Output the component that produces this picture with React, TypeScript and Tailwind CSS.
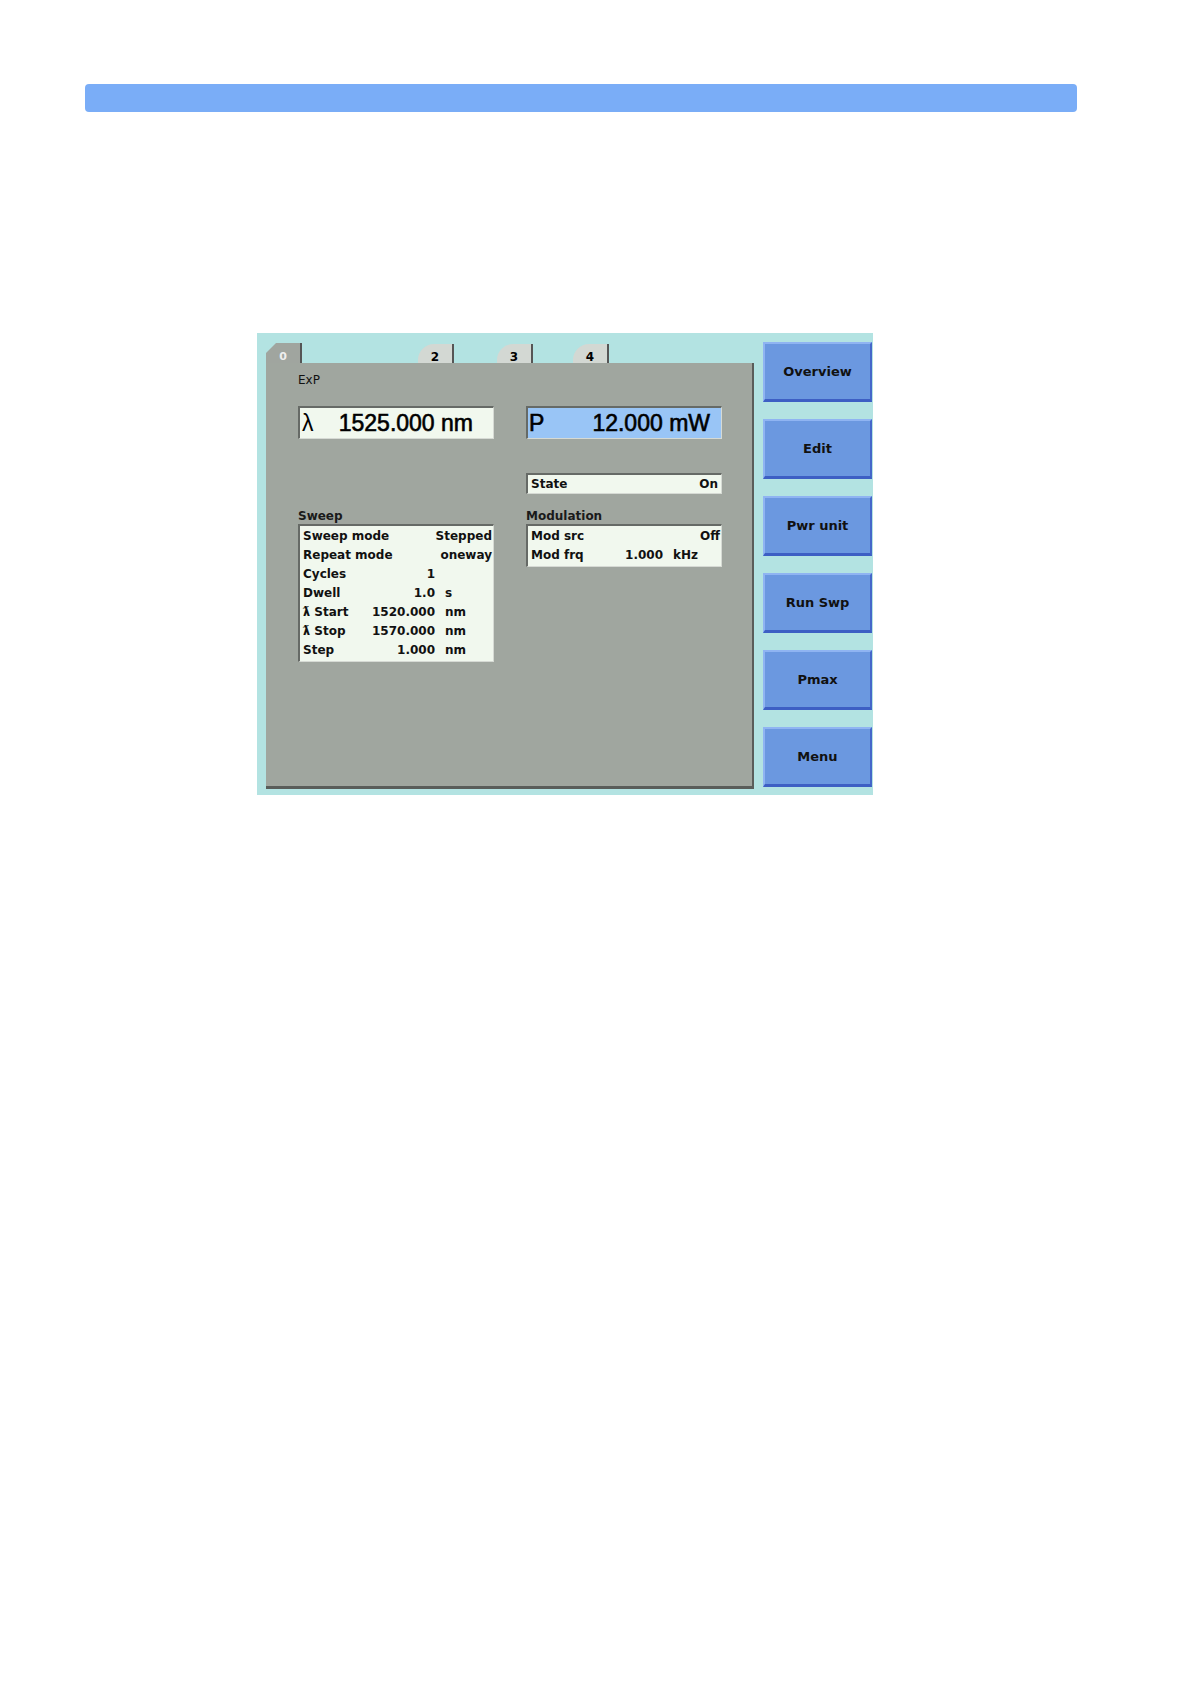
import React from 'react';

const uiFont = { fontFamily: '"DejaVu Sans", Verdana, sans-serif' };
const bigFont = { fontFamily: '"Liberation Sans", Arial, sans-serif' };

type Row = { label: string; value: string; unit?: string; wide?: boolean };

const sweepRows: Row[] = [
  { label: 'Sweep mode', value: 'Stepped', wide: true },
  { label: 'Repeat mode', value: 'oneway', wide: true },
  { label: 'Cycles', value: '1' },
  { label: 'Dwell', value: '1.0', unit: 's' },
  { label: 'ƛ Start', value: '1520.000', unit: 'nm' },
  { label: 'ƛ Stop', value: '1570.000', unit: 'nm' },
  { label: 'Step', value: '1.000', unit: 'nm' },
];

const modRows: Row[] = [
  { label: 'Mod src', value: 'Off', wide: true },
  { label: 'Mod frq', value: '1.000', unit: 'kHz' },
];

const buttons = ['Overview', 'Edit', 'Pwr unit', 'Run Swp', 'Pmax', 'Menu'];

function ParamRow({ row }: { row: Row }) {
  if (row.wide) {
    return (
      <div className="flex h-[19px] items-center justify-between pr-[1px]">
        <span>{row.label}</span>
        <span>{row.value}</span>
      </div>
    );
  }
  return (
    <div className="flex h-[19px] items-center">
      <span className="w-[66px] shrink-0 whitespace-nowrap">{row.label}</span>
      <span className="w-[66px] shrink-0 text-right">{row.value}</span>
      {row.unit && <span className="ml-[10px]">{row.unit}</span>}
    </div>
  );
}

function ParamBox({ rows }: { rows: Row[] }) {
  return (
    <div className="w-[196px] border-t-2 border-l-2 border-[#666a66] border-r border-b border-r-[#d6dad4] border-b-[#d6dad4] bg-[#f1f8ee] pl-[3px] pb-[2px] text-[12px] font-bold text-[#111]">
      {rows.map((r) => (
        <ParamRow key={r.label} row={r} />
      ))}
    </div>
  );
}

function Tab({ label, className }: { label: string; className: string }) {
  return (
    <div
      className={`flex h-[19px] w-[36px] items-end justify-center rounded-tl-[16px] border-r-2 border-[#555] bg-[#d3d8d3] text-[12px] leading-[12px] font-bold text-black ${className}`}
    >
      {label}
    </div>
  );
}

export default function App() {
  return (
    <div className="relative h-[1682px] w-[1190px] bg-white" style={uiFont}>
      <div className="pt-[84px] pl-[85px]">
        <div className="h-[28px] w-[992px] rounded-[4px] bg-[#7aadf7]" />
      </div>

      <div className="ml-[257px] mt-[221px] flex h-[462px] w-[616px] bg-[#b3e3e2]">
        {/* left: tabs and display */}
        <div className="flex w-[497px] flex-col pl-[9px] pt-[10px]">
          <div className="flex h-[20px] items-end">
            <div className="flex h-[20px] w-[36px] items-end justify-center border-r-2 border-[#555] bg-[#a0a59f] text-[11px] leading-[12px] font-bold text-[#eee] [clip-path:polygon(10px_0,100%_0,100%_100%,0_100%,0_10px)]">
              0
            </div>
            <Tab label="2" className="ml-[116px]" />
            <Tab label="3" className="ml-[43px]" />
            <Tab label="4" className="ml-[40px]" />
          </div>

          <div className="h-[426px] w-[488px] border-r-2 border-b-[3px] border-[#5a5d5a] bg-[#a0a69f] pl-[32px] pt-[10px]">
            <div className="h-[14px] text-[12px] leading-[14px] text-[#111]">ExP</div>

            <div className="mt-[19px] flex gap-[32px]">
              {/* left column */}
              <div className="flex w-[196px] flex-col">
                <div
                  className="flex h-[33px] items-center justify-between border-t-2 border-l-2 border-[#666a66] border-r border-b border-r-[#d6dad4] border-b-[#d6dad4] bg-[#f1f8ee] pl-[2px] pr-[20px] text-[23px] text-black [-webkit-text-stroke:0.6px_black]"
                  style={bigFont}
                >
                  <span className="[-webkit-text-stroke:0px]">λ</span>
                  <span>1525.000 nm</span>
                </div>
                <div className="mt-[70px] h-[15px] text-[12px] leading-[15px] font-bold text-[#1a1a1a]">Sweep</div>
                <ParamBox rows={sweepRows} />
              </div>

              {/* right column */}
              <div className="flex w-[196px] flex-col">
                <div
                  className="flex h-[33px] items-center justify-between border-t-2 border-l-2 border-[#666a66] border-r border-b border-r-[#d6dad4] border-b-[#d6dad4] bg-[#99c5f6] pl-[1px] pr-[11px] text-[23px] text-black [-webkit-text-stroke:0.6px_black]"
                  style={bigFont}
                >
                  <span>P</span>
                  <span>12.000 mW</span>
                </div>
                <div className="mt-[34px] flex h-[21px] items-center justify-between border-t-2 border-l-2 border-[#666a66] border-r border-b border-r-[#d6dad4] border-b-[#d6dad4] bg-[#f1f8ee] px-[3px] text-[12px] font-bold text-[#111]">
                  <span>State</span>
                  <span>On</span>
                </div>
                <div className="mt-[15px] h-[15px] text-[12px] leading-[15px] font-bold text-[#1a1a1a]">Modulation</div>
                <ParamBox rows={modRows} />
              </div>
            </div>
          </div>
        </div>

        {/* right: softkeys */}
        <div className="ml-[9px] flex flex-col gap-[17px] pt-[9px]">
          {buttons.map((b) => (
            <div
              key={b}
              className="flex h-[60px] w-[109px] items-center justify-center border-t-2 border-l-2 border-[#8fb4f2] border-r-2 border-b-[3px] border-r-[#4567c9] border-b-[#3d5fc4] bg-[#6b98e0] text-[13px] font-bold text-[#111]"
            >
              {b}
            </div>
          ))}
        </div>
      </div>
    </div>
  );
}
